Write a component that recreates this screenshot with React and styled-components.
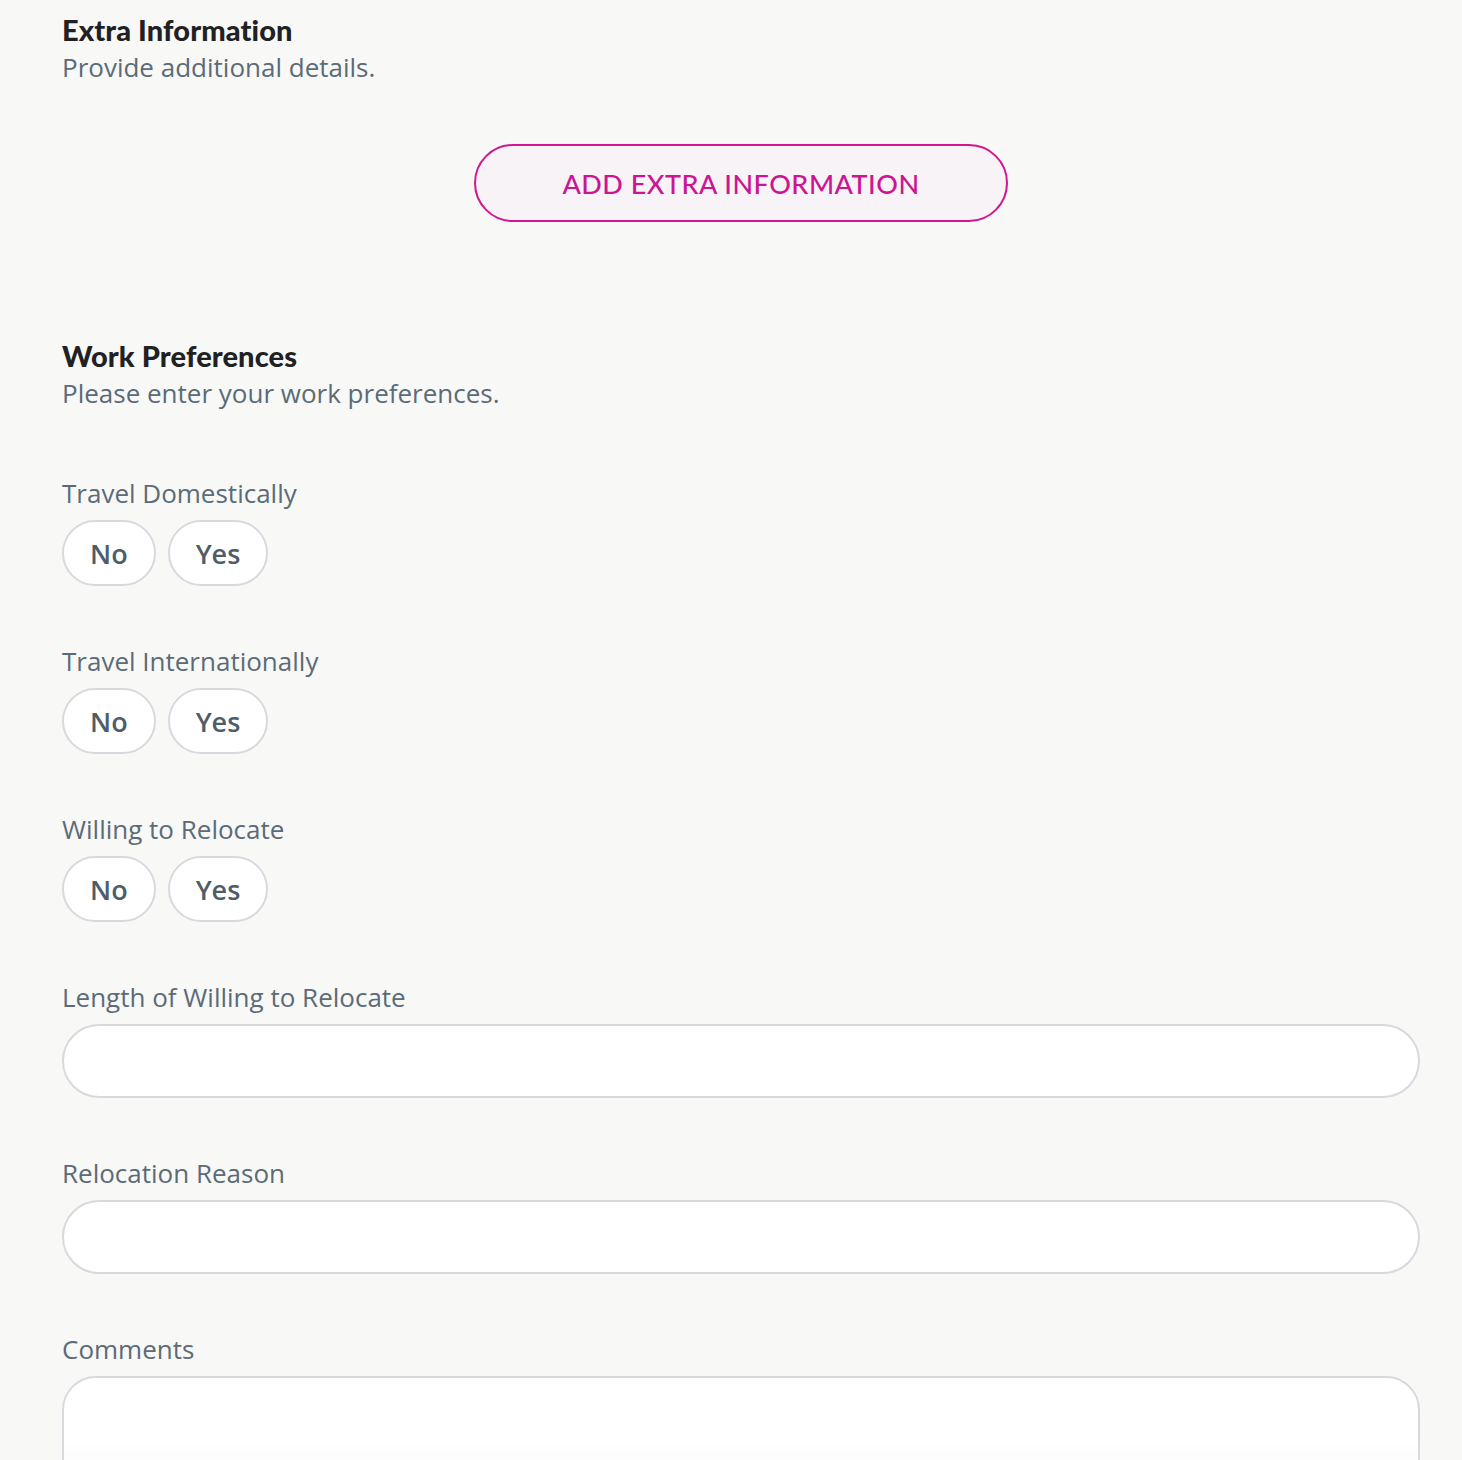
import React from 'react'
import styled, { createGlobalStyle } from 'styled-components'

const GlobalStyle = createGlobalStyle`
    html, body {
        margin: 0;
        padding: 0;
        background: #f8f8f7;
    }
    body {
        font-family: "Open Sans", "Liberation Sans", sans-serif;
    }
`

const Page = styled.div`
    padding: 12px 42px 0 62px;
    min-height: 1460px;
    box-sizing: border-box;
`

const SectionTitle = styled.h2`
    margin: 0;
    font-family: Lato, "Liberation Sans", sans-serif;
    font-weight: 900;
    font-size: 29px;
    line-height: 36px;
    color: #1f2123;
    letter-spacing: 0.1px;
`

const SectionSub = styled.p`
    margin: 0;
    font-size: 26px;
    line-height: 38px;
    color: #5b6b77;
`

const Section = styled.section`
    margin-top: ${p => p.$top || 0}px;
`

const Center = styled.div`
    display: flex;
    justify-content: center;
    margin-top: 58px;
`

const OutlineButton = styled.button`
    width: 534px;
    height: 78px;
    border: 2px solid #d1168f;
    border-radius: 39px;
    background: #f8f3f6;
    color: #cc1592;
    font-family: Lato, "Liberation Sans", sans-serif;
    font-size: 27px;
    font-weight: 500;
    letter-spacing: 0.5px;
    cursor: pointer;
`

const Fields = styled.div`
    display: flex;
    flex-direction: column;
    gap: 60px;
    margin-top: 66px;
`

const Field = styled.div`
    display: flex;
    flex-direction: column;
    gap: 12px;
`

const Label = styled.label`
    font-size: 26px;
    line-height: 30px;
    color: #5b6b77;
`

const Choices = styled.div`
    display: flex;
    gap: 12px;
`

const Choice = styled.button`
    height: 66px;
    padding: 0 26px;
    border: 2px solid #d6dadd;
    border-radius: 33px;
    background: #fff;
    font-family: "Open Sans", "Liberation Sans", sans-serif;
    font-size: 27px;
    font-weight: 600;
    color: #4d5d69;
    cursor: pointer;
`

const Input = styled.input`
    box-sizing: border-box;
    width: 100%;
    height: 74px;
    border: 2px solid #d6dadd;
    border-radius: 37px;
    background: #fff;
    padding: 0 28px;
    font-family: inherit;
    font-size: 24px;
    outline: none;
`

const TextArea = styled.textarea`
    box-sizing: border-box;
    width: 100%;
    height: 160px;
    border: 2px solid #d6dadd;
    border-radius: 34px;
    background: linear-gradient(#fff 40%, #f3f3f3);
    padding: 20px 28px;
    font-family: inherit;
    font-size: 24px;
    resize: none;
    outline: none;
`

const yesNo = ['Travel Domestically', 'Travel Internationally', 'Willing to Relocate']

export default function App() {
    return (
        <Page>
            <GlobalStyle/>
            <Section>
                <SectionTitle>Extra Information</SectionTitle>
                <SectionSub>Provide additional details.</SectionSub>
                <Center>
                    <OutlineButton>ADD EXTRA INFORMATION</OutlineButton>
                </Center>
            </Section>
            <Section $top={116}>
                <SectionTitle>Work Preferences</SectionTitle>
                <SectionSub>Please enter your work preferences.</SectionSub>
                <Fields>
                    {yesNo.map(q => (
                        <Field key={q}>
                            <Label>{q}</Label>
                            <Choices>
                                <Choice>No</Choice>
                                <Choice>Yes</Choice>
                            </Choices>
                        </Field>
                    ))}
                    <Field>
                        <Label>Length of Willing to Relocate</Label>
                        <Input/>
                    </Field>
                    <Field>
                        <Label>Relocation Reason</Label>
                        <Input/>
                    </Field>
                    <Field>
                        <Label>Comments</Label>
                        <TextArea/>
                    </Field>
                </Fields>
            </Section>
        </Page>
    )
}
